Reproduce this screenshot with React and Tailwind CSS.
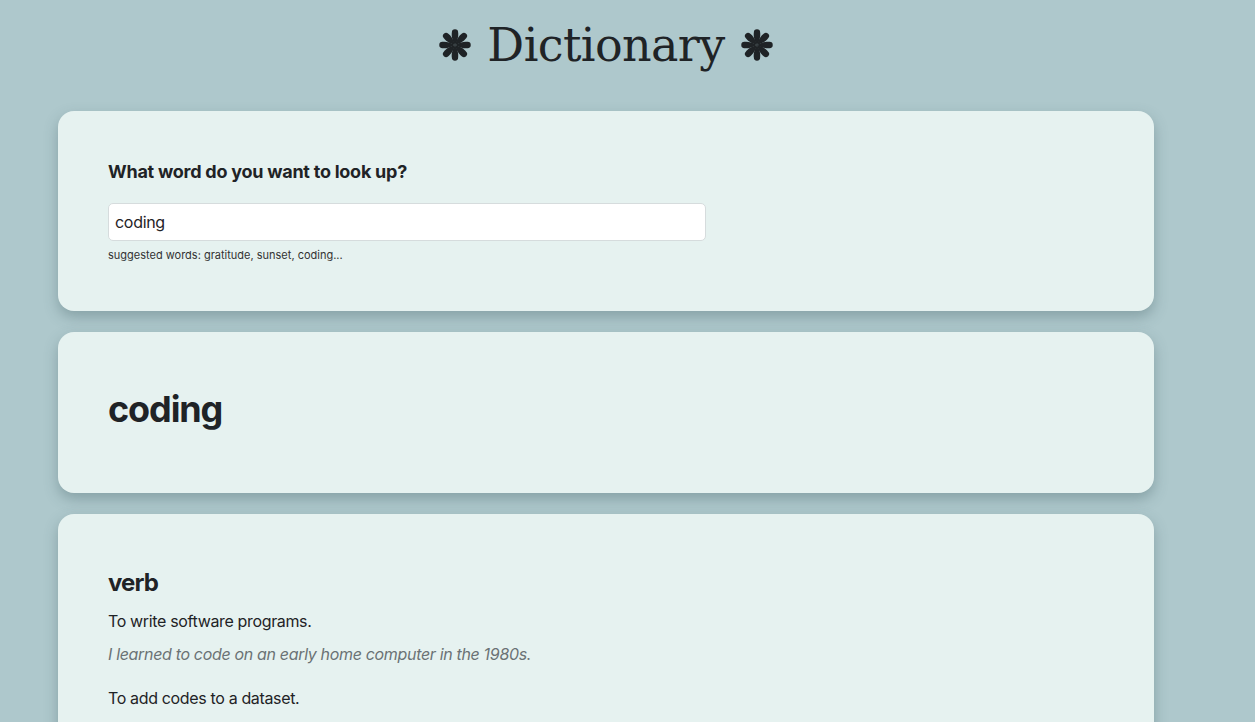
import React from 'react';

const Asterisk = () => (
  <svg viewBox="0 0 40 40" className="w-[36px] h-[36px] inline-block" fill="#1f2326">
    {[0, 45, 90, 135, 180, 225, 270, 315].map((a) => (
      <path
        key={a}
        d="M20 20 C16.5 14 16 9 16.5 6 A3.5 3.5 0 0 1 23.5 6 C24 9 23.5 14 20 20 Z"
        transform={`rotate(${a} 20 20)`}
      />
    ))}
  </svg>
);

const App = () => {
  return (
    <div className="min-h-screen bg-[#aec8cc] text-[#1f2326] font-['Inter',sans-serif] overflow-hidden">
      <div className="ml-[58px] w-[1096px]">
        <h1 className="flex justify-center items-center gap-[14px] h-[92px] pb-[2px] font-['DejaVu_Serif',serif] text-[46px] tracking-[-0.6px]">
          <Asterisk />
          <span>Dictionary</span>
          <Asterisk />
        </h1>

        <section className="mt-[19px] bg-[#e6f2f0] rounded-[16px] shadow-[0_6px_14px_rgba(60,90,95,0.35)] px-[50px] h-[200px] pt-[50px]">
          <h2 className="text-[18px] font-bold leading-[22px] tracking-[-0.25px]">What word do you want to look up?</h2>
          <input
            type="search"
            defaultValue="coding"
            className="mt-[20px] w-[598px] h-[38px] bg-white border border-[#d6dcdd] rounded-[5px] px-[6px] text-[16px] tracking-[-0.3px] outline-none"
          />
          <p className="mt-[6px] text-[11px] text-[#333]">suggested words: gratitude, sunset, coding...</p>
        </section>

        <section className="mt-[21px] bg-[#e6f2f0] rounded-[16px] shadow-[0_6px_14px_rgba(60,90,95,0.35)] px-[50px] h-[161px] flex items-center">
          <h2 className="text-[36px] font-bold tracking-[-1.1px] pb-[7px]">coding</h2>
        </section>

        <section className="mt-[21px] bg-[#e6f2f0] rounded-[16px] shadow-[0_6px_14px_rgba(60,90,95,0.35)] px-[50px] pt-[54px] pb-[40px]">
          <h3 className="text-[24px] font-bold leading-[30px] tracking-[-0.9px]">verb</h3>
          <p className="mt-[11px] text-[16px] leading-[24px] tracking-[-0.35px]">To write software programs.</p>
          <p className="mt-[9px] text-[16px] leading-[24px] italic text-[#6b7275] tracking-[-0.33px]">
            I learned to code on an early home computer in the 1980s.
          </p>
          <p className="mt-[20px] text-[16px] leading-[24px] tracking-[-0.35px]">To add codes to a dataset.</p>
        </section>
      </div>
    </div>
  );
};

export default App;
